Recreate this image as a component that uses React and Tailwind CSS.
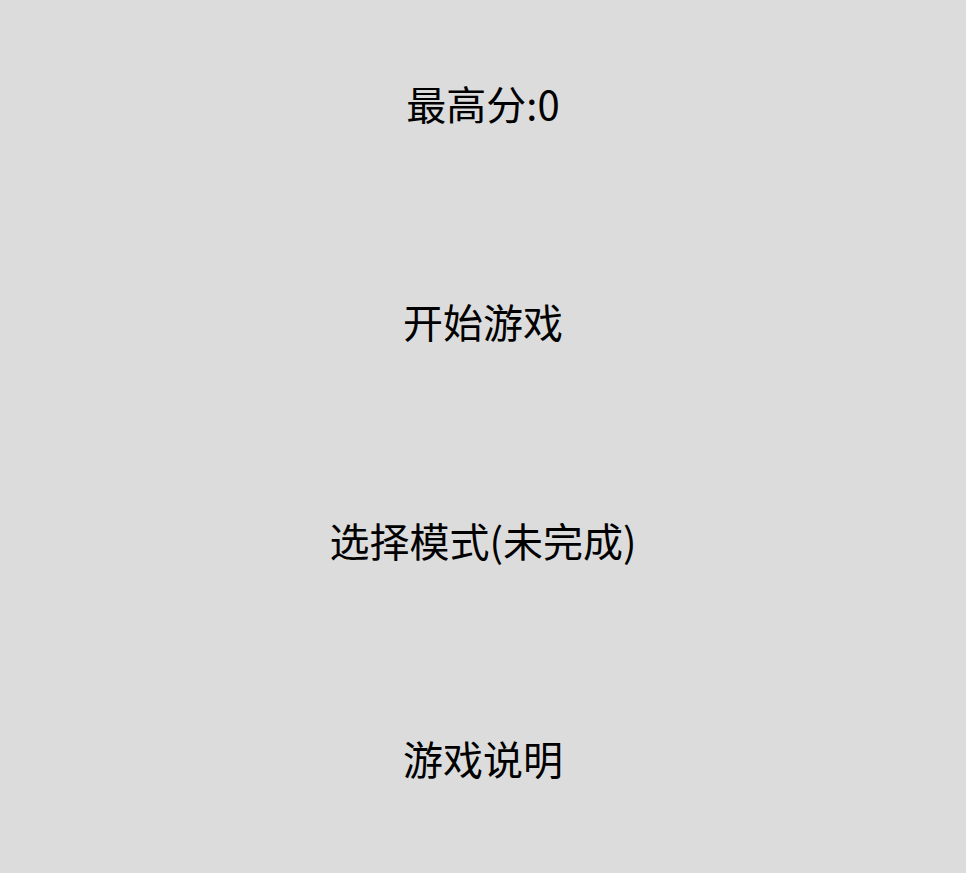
const items = ["最高分:0", "开始游戏", "选择模式(未完成)", "游戏说明"];

export default function App() {
  return (
    <div
      className="h-screen w-full bg-[#dcdcdc] flex flex-col text-black text-[40px]"
      style={{ fontFamily: '"Noto Sans CJK SC", "Noto Sans", sans-serif' }}
    >
      {items.map((label) => (
        <div key={label} className="flex-1 flex items-center justify-center pb-3">
          <span className="leading-none cursor-pointer select-none">{label}</span>
        </div>
      ))}
    </div>
  );
}
